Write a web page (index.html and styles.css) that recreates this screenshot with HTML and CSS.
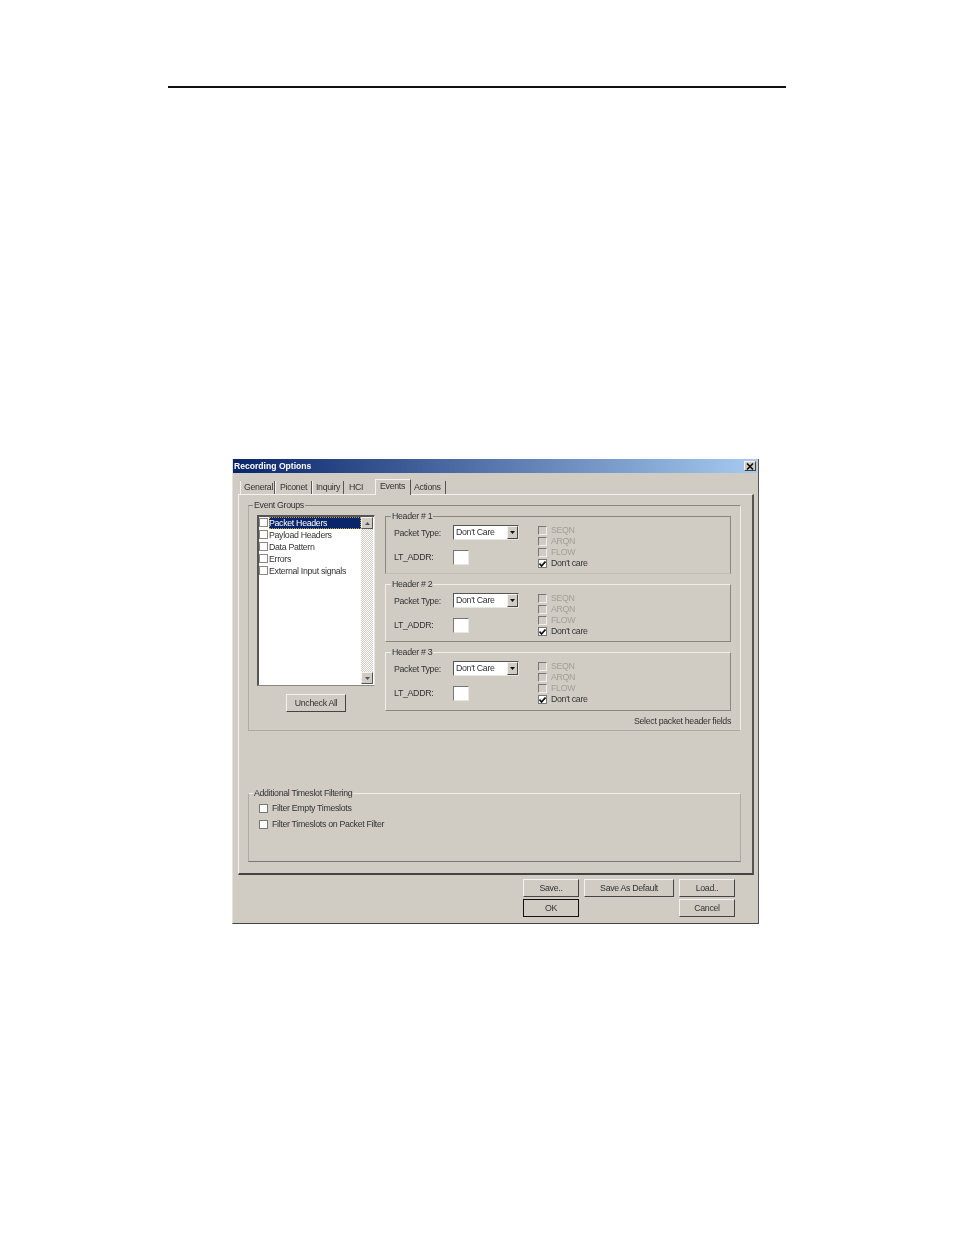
FILE: index.html
```html
<!doctype html>
<html lang="en">
<head>
	<meta charset="UTF-8">
	<title>Recording Options</title>
	<link rel="stylesheet" href="styles.css">
</head>
<body>
	<div class="rule"></div>
	<div class="dialog">
		<div class="titlebar">
			<span>Recording Options</span>
			<div class="close">
				<svg width="8" height="7" viewBox="0 0 8 7"><path d="M1 0.5L7 6.5M7 0.5L1 6.5" stroke="#111" stroke-width="1.6" fill="none"/></svg>
			</div>
		</div>
		<div class="tabs">
			<div class="tab t1">General</div>
			<div class="tab t2">Piconet</div>
			<div class="tab t3">Inquiry</div>
			<div class="tab t4">HCI</div>
			<div class="tab t5 active">Events</div>
			<div class="tab t6">Actions</div>
		</div>
		<div class="panel">
			<fieldset class="group events">
				<legend>Event Groups</legend>
				<div class="events_body">
					<div class="left_col">
						<div class="listbox">
							<ul class="list">
								<li class="selected"><i class="box"></i><span>Packet Headers</span></li>
								<li><i class="box"></i><span>Payload Headers</span></li>
								<li><i class="box"></i><span>Data Pattern</span></li>
								<li><i class="box"></i><span>Errors</span></li>
								<li><i class="box"></i><span>External Input signals</span></li>
							</ul>
							<div class="scrollbar">
								<div class="sbtn"><svg width="5" height="3" viewBox="0 0 5 3"><path d="M2.5 0L5 3H0Z" fill="#555"/></svg></div>
								<div class="track"></div>
								<div class="sbtn"><svg width="5" height="3" viewBox="0 0 5 3"><path d="M0 0H5L2.5 3Z" fill="#555"/></svg></div>
							</div>
						</div>
						<div class="btn uncheck">Uncheck All</div>
					</div>
					<div class="right_col">
						<fieldset class="group header h1">
							<legend>Header # 1</legend>
							<div class="header_body">
								<div class="fields">
									<div class="field"><label>Packet Type:</label><div class="select"><span>Don't Care</span><div class="dropbtn"><svg width="5" height="3" viewBox="0 0 5 3"><path d="M0 0H5L2.5 3Z" fill="#111"/></svg></div></div></div>
									<div class="field addr"><label>LT_ADDR:</label><div class="input"></div></div>
								</div>
								<ul class="checks">
									<li class="off"><i class="box"></i>SEQN</li>
									<li class="off"><i class="box"></i>ARQN</li>
									<li class="off"><i class="box"></i>FLOW</li>
									<li><i class="box"><svg width="7" height="6" viewBox="0 0 7 6"><path d="M0.5 2.5L2.5 5L6.5 0.5" stroke="#111" stroke-width="1.7" fill="none"/></svg></i>Don't care</li>
								</ul>
							</div>
						</fieldset>
						<fieldset class="group header h2">
							<legend>Header # 2</legend>
							<div class="header_body">
								<div class="fields">
									<div class="field"><label>Packet Type:</label><div class="select"><span>Don't Care</span><div class="dropbtn"><svg width="5" height="3" viewBox="0 0 5 3"><path d="M0 0H5L2.5 3Z" fill="#111"/></svg></div></div></div>
									<div class="field addr"><label>LT_ADDR:</label><div class="input"></div></div>
								</div>
								<ul class="checks">
									<li class="off"><i class="box"></i>SEQN</li>
									<li class="off"><i class="box"></i>ARQN</li>
									<li class="off"><i class="box"></i>FLOW</li>
									<li><i class="box"><svg width="7" height="6" viewBox="0 0 7 6"><path d="M0.5 2.5L2.5 5L6.5 0.5" stroke="#111" stroke-width="1.7" fill="none"/></svg></i>Don't care</li>
								</ul>
							</div>
						</fieldset>
						<fieldset class="group header h3">
							<legend>Header # 3</legend>
							<div class="header_body">
								<div class="fields">
									<div class="field"><label>Packet Type:</label><div class="select"><span>Don't Care</span><div class="dropbtn"><svg width="5" height="3" viewBox="0 0 5 3"><path d="M0 0H5L2.5 3Z" fill="#111"/></svg></div></div></div>
									<div class="field addr"><label>LT_ADDR:</label><div class="input"></div></div>
								</div>
								<ul class="checks">
									<li class="off"><i class="box"></i>SEQN</li>
									<li class="off"><i class="box"></i>ARQN</li>
									<li class="off"><i class="box"></i>FLOW</li>
									<li><i class="box"><svg width="7" height="6" viewBox="0 0 7 6"><path d="M0.5 2.5L2.5 5L6.5 0.5" stroke="#111" stroke-width="1.7" fill="none"/></svg></i>Don't care</li>
								</ul>
							</div>
						</fieldset>
						<div class="hint">Select packet header fields</div>
					</div>
				</div>
			</fieldset>
			<fieldset class="group additional">
				<legend>Additional Timeslot Filtering</legend>
				<div class="filter"><i class="box"></i>Filter Empty Timeslots</div>
				<div class="filter"><i class="box"></i>Filter Timeslots on Packet Filter</div>
			</fieldset>
		</div>
		<div class="buttons">
			<div class="btn">Save..</div>
			<div class="btn">Save As Default</div>
			<div class="btn">Load..</div>
			<div class="btn default">OK</div>
			<div></div>
			<div class="btn">Cancel</div>
		</div>
	</div>
</body>
</html>
```

FILE: styles.css
```css
*,*::before,*::after{box-sizing:border-box;}
html,body,ul,li,fieldset,legend{margin:0;padding:0;list-style:none;}
body{
	background:#fff;
	font-family:"Liberation Sans",Arial,sans-serif;
	font-size:8.8px;
	letter-spacing:-.32px;
	color:#333;
}
.rule{
	margin:86px 168px 0;
	height:2px;
	background:#111;
}
.dialog{
	margin:371px 0 0 232px;
	width:527px;
	height:465px;
	background:#d0ccc4;
	border-left:1px solid #e4e2dc;
	border-right:1px solid #555;
	border-bottom:1px solid #444;
	filter:blur(.35px);
}
.titlebar{
	height:14px;
	margin-right:1px;
	padding:0 1px;
	display:flex;
	align-items:center;
	justify-content:space-between;
	background:linear-gradient(to right,#0a246a,#a6caf0);
	color:#fff;
	font-size:8.6px;
	letter-spacing:0;
	font-weight:bold;
}
.close{
	width:12px;
	height:10px;
	display:flex;
	align-items:center;
	justify-content:center;
	background:#d0ccc4;
	border:1px solid;
	border-color:#f4f2ee #444 #444 #f4f2ee;
}
.tabs{
	height:21px;
	padding-left:7px;
	display:flex;
	align-items:flex-end;
}
.tab{
	height:13px;
	line-height:12px;
	padding-left:3px;
	border-right:1px solid #555;
}
.t1{width:35px;border-left:1px solid #f4f2ee;}
.t2{width:37px;padding-left:4px;border-left:1px solid #f4f2ee;}
.t3{width:32px;border-left:1px solid #f4f2ee;}
.t4{width:31px;padding-left:5px;border-right:0;}
.t6{width:35px;padding-left:3px;}
.active{
	width:36px;
	height:16px;
	padding-left:4px;
	background:#d0ccc4;
	border-top:1px solid #f4f2ee;
	border-left:1px solid #f4f2ee;
	margin-bottom:-1px;
	position:relative;
	z-index:1;
}
.panel{
	margin-left:5px;
	width:516px;
	height:381px;
	padding:5px 0 0 9px;
	border:1px solid;
	border-color:#f4f2ee #555 #444 #f4f2ee;
	border-right-width:2px;
	border-bottom-width:2px;
}
.group{
	min-width:0;
	border:1px solid #8a8780;
}
.group legend{
	height:10px;
	line-height:10px;
	padding:0 1px;
}
.events{
	width:493px;
	height:231px;
	padding:5px 8px 0;
	border-color:#8a8780 #f0eee8 #aeaba4 #aeaba4;
}
.events>legend{margin-left:-4px;}
.events_body{display:flex;gap:10px;}
.left_col{width:118px;}
.listbox{
	height:171px;
	display:flex;
	background:#fff;
	border:1px solid;
	border-color:#555 #e8e6e0 #8a8780 #555;
	box-shadow:inset 1px 1px 0 #555;
	padding:1px;
}
.list{flex:1;}
.list li{
	height:12px;
	line-height:12px;
	display:flex;
	align-items:center;
}
.list .box{margin:-1px 1px 0 0;border-color:#8a8780;}
.list li span{height:12px;flex:1;}
.selected span{
	background:#0a246a;
	color:#fff;
	outline:1px dotted #c0a050;
	outline-offset:-1px;
}
.scrollbar{
	width:12px;
	display:flex;
	flex-direction:column;
}
.sbtn{
	height:12px;
	display:flex;
	align-items:center;
	justify-content:center;
	background:#d0ccc4;
	border:1px solid;
	border-color:#f4f2ee #555 #555 #f4f2ee;
}
.track{
	flex:1;
	background:repeating-conic-gradient(#d0ccc4 0 25%,#fff 0 50%) 0 0/2px 2px;
}
.box{
	flex:none;
	display:inline-flex;
	align-items:center;
	justify-content:center;
	width:9px;
	height:9px;
	background:#fff;
	border:1px solid #777;
}
.btn{
	display:flex;
	align-items:center;
	justify-content:center;
	height:18px;
	background:#d0ccc4;
	border:1px solid;
	border-color:#f4f2ee #444 #444 #f4f2ee;
}
.uncheck{
	width:60px;
	margin:8px 0 0 29px;
}
.right_col{width:346px;margin-top:-4px;}
.header{
	height:63px;
	margin-bottom:5px;
	padding:4px 0 0 8px;
}
.header>legend{margin-left:-3px;}
.h1{border-color:#8a8780 #8a8780 #c0bdb6 #8a8780;}
.h2,.h3{border-color:#f0eee8 #8a8780 #8a8780 #f0eee8;}
.h3{height:64px;margin-bottom:0;}
.header_body{display:flex;}
.fields{width:144px;}
.field{display:flex;align-items:center;}
.field label{width:59px;}
.addr{margin-top:10px;}
.addr label{padding-bottom:2px;}
.select{
	width:66px;
	height:15px;
	display:flex;
	justify-content:space-between;
	background:#fff;
	border:1px solid;
	border-color:#555 #e8e6e0 #e8e6e0 #555;
	line-height:13px;
	padding-left:2px;
}
.dropbtn{
	width:11px;
	display:flex;
	align-items:center;
	justify-content:center;
	background:#d0ccc4;
	border:1px solid;
	border-color:#f4f2ee #444 #444 #f4f2ee;
}
.input{
	width:16px;
	height:15px;
	background:#fff;
	border:1px solid;
	border-color:#777 #e8e6e0 #e8e6e0 #777;
}
.checks li{
	height:11px;
	line-height:11px;
	display:flex;
	align-items:center;
	gap:4px;
}
.off{color:#a29e96;}
.off .box{
	background:#d0ccc4;
	border-color:#777 #f0eee8 #f0eee8 #777;
}
.hint{
	height:10px;
	line-height:10px;
	margin-top:5px;
	text-align:right;
}
.additional{
	width:493px;
	height:74px;
	margin-top:57px;
	padding:2px 10px 0;
	border-color:#f0eee8 #aeaba4 #777 #aeaba4;
}
.additional>legend{margin-left:-6px;}
.filter{
	height:16px;
	display:flex;
	align-items:center;
	gap:4px;
}
.buttons{
	margin:4px 0 0 290px;
	display:grid;
	grid-template-columns:56px 90px 56px;
	grid-auto-rows:18px;
	gap:2px 5px;
}
.default{border:1px solid #111;}
```
